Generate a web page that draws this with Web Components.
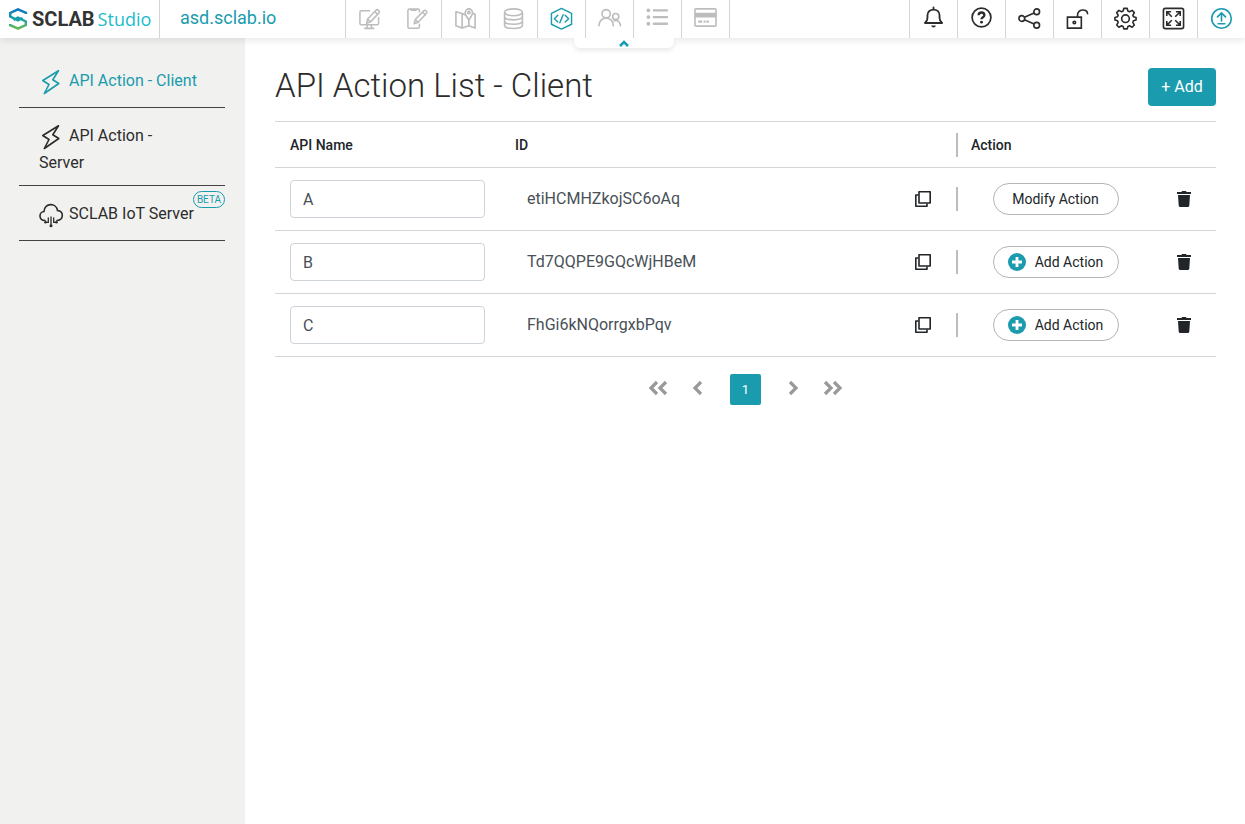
<!DOCTYPE html>
<html lang="en">
<head>
<meta charset="utf-8">
<meta name="viewport" content="width=device-width, initial-scale=1">
<title>SCLAB Studio</title>
<style>
:root{--teal:#1a9bae;--ink:#2c2c2c;--line:#d5d5d5;--muted:#bdbdbd}
body{margin:0;background:#fff;color:var(--ink);font:400 16px/24px Roboto,"Noto Sans CJK KR",sans-serif}
</style>
</head>
<body>
<studio-app>
  <studio-header slot="header" domain="asd.sclab.io"></studio-header>
  <side-menu slot="side">
    <side-item icon="bolt" active>API Action - Client</side-item>
    <side-item icon="bolt">API Action - Server</side-item>
    <side-item icon="cloud" badge="BETA">SCLAB IoT Server</side-item>
  </side-menu>
  <page-title>API Action List - Client</page-title>
  <api-table></api-table>
  <page-nav></page-nav>
</studio-app>

<script>
const ICONS = {
  desktop: ['0 0 24 24', '<g fill="none" stroke="currentColor" stroke-width="1.6" stroke-linejoin="round" stroke-linecap="round"><path d="M12 4H3.500Q2 4 2 5.500V17Q2 18.500 3.500 18.500H20Q21.500 18.500 21.500 17V11M9.500 18.500V21M14 18.500V21M7 22.300H16.500M9 17L10 12.500L19 3.200Q20 2.300 21 3.300L22 4.300Q22.800 5.200 22 6.100L13 15.500ZM17.500 4.800L20.500 7.700M10 12.500L13 15.500"/></g>'],
  mobile: ['0 0 24 24', '<g fill="none" stroke="currentColor" stroke-width="1.6" stroke-linejoin="round" stroke-linecap="round"><path d="M14 5V3.500Q14 2.200 12.700 2.200H3.500Q2 2.200 2 3.700V20.700Q2 22.200 3.500 22.200H12.500Q14 22.200 14 20.700V18M5.500 2.500V3.500H10.500V2.500M8.500 17.500L9.700 13L18.700 3.800Q19.700 3 20.600 3.900L21.500 4.800Q22.300 5.600 21.500 6.600L12.600 16ZM17.300 5.300L20.200 8.200M9.700 13L12.600 16"/></g>'],
  map: ['0 0 24 24', '<g fill="none" stroke="currentColor" stroke-width="1.700" stroke-linejoin="round"><path d="M12.500 8.500L8.500 6.800L2 5V19.500L8.500 22L15.500 19.500L22 22V7.500L19.500 6.500M8.500 6.800V22M15.500 13V19.500"/><path d="M15.500 13.500Q11.700 8.800 11.700 5.800A3.800 3.800 0 0 1 19.300 5.800Q19.300 8.800 15.500 13.500Z"/><circle cx="15.500" cy="5.800" r="1.200"/></g>'],
  data: ['0 0 24 24', '<g fill="none" stroke="currentColor" stroke-width="1.700"><ellipse cx="12" cy="5.500" rx="9.300" ry="3.600"/><path d="M2.700 5.500V19C2.700 23.600 21.300 23.600 21.300 19V5.500M2.700 10C2.700 14.600 21.300 14.600 21.300 10M2.700 14.500C2.700 19.100 21.300 19.100 21.300 14.500"/></g>'],
  code: ['0 0 24 24', '<g fill="none" stroke="currentColor" stroke-width="1.500" stroke-linejoin="round" stroke-linecap="round"><path d="M12 1.500L22.500 6.600V18L12 23L1.500 18V6.600ZM8.200 8.700L4.500 12.200L8.200 15.700M15.800 8.700L19.500 12.200L15.800 15.700M13.700 8L10.300 16.500"/></g>'],
  users: ['0 0 24 24', '<g fill="none" stroke="currentColor" stroke-width="1.700" stroke-linecap="round"><circle cx="8.500" cy="7" r="4.300"/><path d="M1 19.500C1.500 8.800 15.500 8.800 16 19.500"/><circle cx="18.500" cy="10" r="3.200"/><path d="M16.800 14.300Q22.700 13 23.500 19.500"/></g>'],
  list: ['0 1 24 24', '<g fill="currentColor"><circle cx="2.500" cy="4.500" r="2"/><circle cx="2.500" cy="11.500" r="2"/><circle cx="2.500" cy="18.500" r="2"/><rect x="7" y="3.300" width="16" height="2.400" rx="1"/><rect x="7" y="10.300" width="16" height="2.400" rx="1"/><rect x="7" y="17.300" width="16" height="2.400" rx="1"/></g>'],
  card: ['0 1 24 24', '<path fill="none" stroke="currentColor" stroke-width="1.700" d="M2 3H22Q23 3 23 4V20Q23 21 22 21H2Q1 21 1 20V4Q1 3 2 3Z"/><path fill="currentColor" d="M1 7H23V12H1ZM4.500 15H8.500V17.500H4.500ZM10 15H12V17.500H10ZM13 15H15.500V17.500H13Z"/>'],
  bell: ['0 1 24 24', '<g fill="none" stroke="currentColor" stroke-width="1.900" stroke-linejoin="round" stroke-linecap="round"><path d="M12 1.500V3.500M3 17.700H21Q18.300 15.500 18.300 12.500V9.500C18.300 1.700 5.700 1.700 5.700 9.500V12.500Q5.700 15.500 3 17.700Z"/></g><path fill="currentColor" d="M9.500 20.300H14.500Q14 22.500 12 22.500T9.500 20.300Z"/>'],
  help: ['0 1 24 24', '<circle cx="12" cy="12" r="9.800" fill="none" stroke="currentColor" stroke-width="1.800"/><path d="M9 9.500C9 5.800 15 5.800 15 9.500C15 11.600 12 11.700 12 13.700" fill="none" stroke="currentColor" stroke-width="2.400"/><circle cx="12" cy="16.800" r="1.500" fill="currentColor"/>'],
  share: ['0 0 24 24', '<g fill="none" stroke="currentColor" stroke-width="1.700"><circle cx="4" cy="12" r="3"/><circle cx="19.500" cy="5" r="3"/><circle cx="19.500" cy="19" r="3"/><path d="M6.700 10.700L16.800 6.200M6.700 13.300L16.800 17.700"/></g>'],
  lock: ['0 0 24 24', '<g fill="none" stroke="currentColor" stroke-width="1.700"><path d="M1.500 10.500H16V22H1.500Z"/><circle cx="8.700" cy="16.200" r="1.300"/><path d="M12 10.500V9C12 1.500 22.500 1.500 22.500 7" stroke-linecap="round"/></g>'],
  gear: ['0 0 24 24', '<g fill="none" stroke="currentColor" stroke-width="1.700" stroke-linejoin="round"><path d="M10.200 1.500H13.800L14.500 4.300L16.100 5L18.900 3.500L21.200 5.800L19.700 8.600L20.300 10.200L23 11V13.600L20.300 14.400L19.700 16L21.200 18.800L18.900 21.100L16.100 19.600L14.500 20.300L13.800 22.800H10.200L9.500 20.300L7.900 19.600L5.100 21.100L2.800 18.800L4.300 16L3.700 14.400L1 13.600V11L3.700 10.200L4.300 8.600L2.800 5.800L5.100 3.500L7.900 5L9.500 4.300Z"/><circle cx="12" cy="12.200" r="4"/></g>'],
  expand: ['0 0 24 24', '<g fill="none" stroke="currentColor" stroke-width="1.700"><rect x="1.500" y="1.500" width="21" height="21" rx="2"/><path d="M5 9.500V5H9.500M5 5L10.200 10.200M14.500 5H19V9.500M19 5L13.800 10.200M5 14.500V19H9.500M5 19L10.200 13.800M14.500 19H19V14.500M19 19L13.800 13.800"/></g>'],
  upload: ['0 0 24 24', '<g fill="none" stroke="currentColor" stroke-width="1.700" stroke-linecap="round" stroke-linejoin="round"><circle cx="12" cy="12" r="10.200"/><path d="M12 14.500V6.500M7.800 10.300L12 6.200L16.200 10.300M8.500 17.500H15.500"/></g>'],
  bolt: ['0 0 24 24', '<path fill="none" stroke="currentColor" stroke-width="1.600" stroke-linejoin="round" d="M19.500 0.800L3.800 10.500L10 14.500L5.300 23.500L19.800 13.500L13.800 9.800Z"/>'],
  cloud: ['0 0 24 24', '<g fill="none" stroke="currentColor" stroke-width="1.600" stroke-linecap="round"><path d="M6 17.500C-1 17 0 8.800 5 8.500C5.500-.5 17.500-.5 18.500 7.500C25 8 25 17 18 17.500"/><path stroke-width="1.300" d="M12 14V22M9.300 15V19.300H7M14.700 15V19.300H17"/></g><g fill="currentColor"><circle cx="12" cy="22.700" r="1.500"/><circle cx="6.500" cy="19.300" r="1.300"/><circle cx="17.500" cy="19.300" r="1.300"/></g>'],
  copy: ['0 0 18 18', '<g fill="none" stroke="currentColor" stroke-width="1.600" stroke-linejoin="round"><rect x="5" y="1.800" width="11.200" height="11.200"/><path d="M4.500 5H1.800V16.200H13V13.500"/></g>'],
  trash: ['0 0 16 18', '<path fill="currentColor" d="M1 2H5.500L6 1H10L10.500 2H15V4H1ZM2 5H14L13.300 15.500Q13.200 17 11.700 17H4.300Q2.800 17 2.700 15.500Z"/>'],
  plus: ['0 0 18 18', '<circle cx="9" cy="9" r="9" fill="#1a9bae"/><path d="M9 4V14M4 9H14" stroke="#fff" stroke-width="2.800"/>'],
  up: ['0 0 12 8', '<path d="M2 7L6 3L10 7" fill="none" stroke="currentColor" stroke-width="2.600"/>'],
  first: ['0 0 20 16', '<path d="M9 2L3 8L9 14M18 2L12 8L18 14" fill="none" stroke="currentColor" stroke-width="3.200"/>'],
  prev: ['0 0 20 16', '<path d="M13 2L7 8L13 14" fill="none" stroke="currentColor" stroke-width="3.200"/>'],
  next: ['0 0 20 16', '<path d="M7 2L13 8L7 14" fill="none" stroke="currentColor" stroke-width="3.200"/>'],
  last: ['0 0 20 16', '<path d="M2 2L8 8L2 14M11 2L17 8L11 14" fill="none" stroke="currentColor" stroke-width="3.200"/>'],
  logo: ['0 0 20 24', '<defs><linearGradient id="g" gradientUnits="userSpaceOnUse" x1="0" y1="1" x2="0" y2="23"><stop stop-color="#0b6fc0"/><stop offset=".5" stop-color="#139fae"/><stop offset="1" stop-color="#72bd45"/></linearGradient></defs><g fill="none" stroke="url(#g)" stroke-width="2.400"><path d="M18 7V5.800L10 2.300L2.200 6V9.500L10 13.300L14.500 11"/><path d="M5.500 13L10 10.700L17.800 14.500V18L10 21.700L2.200 18.200V17"/></g>']
};

class Base extends HTMLElement {
  connectedCallback() {
    if (this.shadowRoot) return;
    const t = document.createElement('template');
    t.innerHTML = '<style>*,:host{box-sizing:border-box}button{font:inherit;color:inherit;background:none;border:0;padding:0;cursor:pointer}a{color:inherit;text-decoration:none}' + this.css() + '</style>' + this.html();
    this.attachShadow({mode: 'open'}).append(t.content.cloneNode(true));
  }
}

customElements.define('sc-icon', class extends Base {
  css() { return ':host{display:inline-block;width:24px;height:24px;flex:none}svg{display:block;width:100%;height:100%;overflow:visible}'; }
  html() { const [box, art] = ICONS[this.getAttribute('name')]; return `<svg viewBox="${box}" aria-hidden="true">${art}</svg>`; }
});

customElements.define('studio-app', class extends Base {
  css() { return `
    :host{display:flex;flex-direction:column;min-height:100vh}
    .body{flex:1;display:flex}
    main{flex:1;min-width:0;padding:24px 29px 24px 30px}`; }
  html() { return '<slot name="header"></slot><div class="body"><slot name="side"></slot><main><slot></slot></main></div>'; }
});

customElements.define('studio-header', class extends Base {
  css() { return `
    :host{display:flex;height:38px;background:#fff;position:relative;z-index:1;box-shadow:0 2px 8px rgba(0,0,0,.1)}
    .logo{width:160px;border-right:1px solid var(--line);padding-left:8px;display:flex;align-items:center;white-space:nowrap}
    .logo sc-icon{width:20px;height:24px;margin-right:4px}
    .logo b{font:700 20px/36px Roboto,sans-serif;color:#333;margin-right:3px}
    .logo span{font:400 18px/36px "Open Sans",sans-serif;color:#1bbccb}
    .domain{width:185px;padding-left:20px;font-size:18px;line-height:36px;color:var(--teal)}
    .tools,.actions{display:flex}
    .tools{color:var(--muted);border-left:1px solid var(--line)}
    .actions{margin-left:auto}
    button{width:48px;height:38px;display:flex;justify-content:center;align-items:center;padding-bottom:2px}
    .tools button{border-right:1px solid var(--line)}
    .tools button:first-child{border-color:transparent}
    .actions button{border-left:1px solid var(--line)}
    .on{color:var(--teal)}
    button sc-icon{width:23px;height:23px}
    .fold{position:absolute;top:38px;left:calc(50% + 1px);transform:translateX(-50%);width:100px;height:10px;background:#fff;border-radius:0 0 6px 6px;box-shadow:0 3px 4px rgba(0,0,0,.08);color:var(--teal);padding:0}
    .fold sc-icon{width:12px;height:8px}`; }
  html() {
    const b = ([i, l, c]) => `<button type="button" aria-label="${l}" class="${c || ''}"><sc-icon name="${i}"></sc-icon></button>`;
    return `<a class="logo" href="#"><sc-icon name="logo"></sc-icon><b>SCLAB</b><span>Studio</span></a>
    <a class="domain" href="#">${this.getAttribute('domain')}</a>
    <nav class="tools">${[['desktop','Desktop'],['mobile','Mobile'],['map','Map'],['data','Data'],['code','API','on'],['users','Users'],['list','List'],['card','Payment']].map(b).join('')}</nav>
    <div class="actions">${[['bell','Alerts'],['help','Help'],['share','Share'],['lock','Lock'],['gear','Settings'],['expand','Full screen'],['upload','Publish','on']].map(b).join('')}</div>
    <button class="fold" type="button" aria-label="Fold"><sc-icon name="up"></sc-icon></button>`;
  }
});

customElements.define('side-menu', class extends Base {
  css() { return ':host{display:block;width:245px;flex:none;background:#f1f1ef;padding:15px 20px 15px 19px}'; }
  html() { return '<nav><slot></slot></nav>'; }
});

customElements.define('side-item', class extends Base {
  css() { return `
    :host{display:block;position:relative;border-bottom:1px solid #444;color:var(--ink)}
    :host([active]){color:var(--teal)}
    a{display:block;min-height:54px;padding:14px 26px 9px 20px;line-height:27px}
    sc-icon{vertical-align:middle;margin-right:6px}
    .badge{position:absolute;top:5px;right:0;font-size:10px;line-height:15px;padding:0 3px;border:1px solid var(--teal);border-radius:9px;color:var(--teal)}`; }
  html() {
    const badge = this.getAttribute('badge');
    return `<a href="#"><sc-icon name="${this.getAttribute('icon')}"></sc-icon><slot></slot></a>${badge ? `<span class="badge">${badge}</span>` : ''}`;
  }
});

customElements.define('page-title', class extends Base {
  css() { return `
    :host{display:flex;justify-content:space-between;height:59px;padding-top:6px}
    h1{margin:0;font-size:33px;line-height:36px;font-weight:300}
    button{height:38px;min-width:68px;padding:0 12px;border-radius:4px;background:var(--teal);color:#fff}`; }
  html() { return '<h1><slot></slot></h1><button type="button">+ Add</button>'; }
});

customElements.define('api-table', class extends Base {
  css() { return `
    :host{display:block}
    table{width:100%;border-collapse:separate;border-spacing:0;table-layout:fixed;border-top:1px solid var(--line)}
    th,td{padding:0 15px;text-align:left;border-bottom:1px solid var(--line)}
    th{height:46px;font-size:14px;line-height:20px;font-weight:500;color:#212529}
    td{height:63px;color:#495057}
    .name{width:225px}.act{width:201px}.del{width:59px}
    .act{padding:0 4px 0 0}
    input{display:block;width:100%;height:38px;padding:0 12px;border:1px solid #ced4da;border-radius:4px;font:inherit;color:inherit;background:#fff}
    .id,.cell{display:flex;align-items:center}
    .id{justify-content:space-between;padding:0 9px 0 12px}
    .id button,td.del{color:#212529}
    .cell::before{content:"";width:2px;height:24px;background:var(--muted)}
    th .cell{gap:13px}
    .cell button{margin:0 auto;width:126px;height:32px;border:1px solid #b5b5b5;border-radius:16px;font-size:14px;color:#212529;display:flex;align-items:center;justify-content:center;gap:9px}
    .del{padding:0 0 0 19px}
    button{display:block}
    sc-icon{display:block;width:18px;height:18px}
    .del sc-icon{width:16px}`; }
  html() {
    const rows = [['A','etiHCMHZkojSC6oAq'],['B','Td7QQPE9GQcWjHBeM'],['C','FhGi6kNQorrgxbPqv']];
    return `<table><thead><tr><th class="name">API Name</th><th>ID</th><th class="act"><div class="cell">Action</div></th><th class="del"></th></tr></thead><tbody>${rows.map(([n, id], i) => `
      <tr><td><input type="text" aria-label="API Name" value="${n}"></td>
      <td><div class="id"><span>${id}</span><button type="button" aria-label="Copy"><sc-icon name="copy"></sc-icon></button></div></td>
      <td class="act"><div class="cell"><button type="button">${i ? '<sc-icon name="plus"></sc-icon>Add Action' : 'Modify Action'}</button></div></td>
      <td class="del"><button type="button" aria-label="Delete"><sc-icon name="trash"></sc-icon></button></td></tr>`).join('')}</tbody></table>`;
  }
});

customElements.define('page-nav', class extends Base {
  css() { return `
    :host{display:block;margin-top:17px}
    nav{display:flex;justify-content:center;align-items:center}
    button{width:40px;height:31px;display:flex;justify-content:center;align-items:center;color:#999;padding-bottom:3px}
    .page{width:31px;margin:0 12px;border-radius:2px;background:var(--teal);color:#fff;font-size:13px;padding:0}
    sc-icon{width:20px;height:16px}`; }
  html() {
    const b = (i, l) => `<button type="button" aria-label="${l}"><sc-icon name="${i}"></sc-icon></button>`;
    return `<nav aria-label="Pages">${b('first','First')}${b('prev','Previous')}<button type="button" class="page" aria-current="page">1</button>${b('next','Next')}${b('last','Last')}</nav>`;
  }
});
</script>
</body>
</html>
